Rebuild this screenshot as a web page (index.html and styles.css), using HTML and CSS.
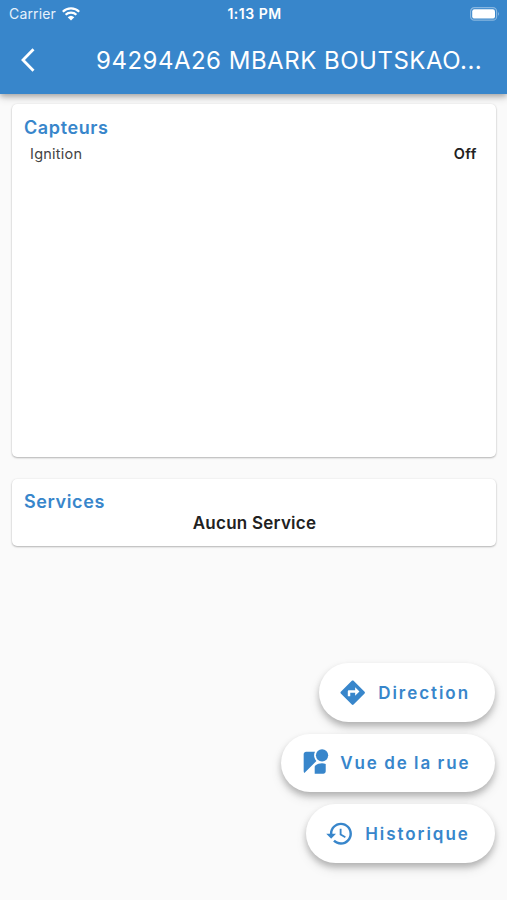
FILE: index.html
```
<!DOCTYPE html>
<html lang="fr">

<head>
    <meta charset="utf-8">
    <title>94294A26 MBARK BOUTSKAO</title>
    <link rel="stylesheet" href="styles.css">
</head>

<body>
    <header class="header">
        <div class="status">
            <div class="carrier">
                <span>Carrier</span>
                <svg class="wifi" viewBox="0 0 18 14">
                    <path d="M0.8 4.7a11.8 11.8 0 0 1 16.4 0M3.6 7.7a7.8 7.8 0 0 1 10.8 0" fill="none" stroke="#fff" stroke-width="2.2"/>
                    <path d="M5.7 10.2a4.8 4.8 0 0 1 6.6 0L9 13.6z" fill="#fff"/>
                </svg>
            </div>
            <div class="time">1:13 PM</div>
            <div class="battery">
                <svg width="30" height="14" viewBox="0 0 30 14">
                    <rect x="0.6" y="0.6" width="26" height="12.6" rx="3.8" fill="none" stroke="#fff" stroke-opacity=".4" stroke-width="1.2"/>
                    <rect x="2.2" y="2.2" width="22.8" height="9.4" rx="2.2" fill="#fff"/>
                    <path d="M28 4.8q1.6 2.1 0 4.2z" fill="#fff" opacity=".5"/>
                </svg>
            </div>
        </div>
        <div class="navbar">
            <svg class="back" viewBox="0 0 16 26">
                <path d="M13.5 2.3L3 13l10.5 10.7" fill="none" stroke="#fff" stroke-width="2.8"/>
            </svg>
            <div class="title">94294A26 MBARK BOUTSKAO...</div>
        </div>
    </header>

    <main class="content">
        <section class="card sensors">
            <h2>Capteurs</h2>
            <div class="row">
                <span>Ignition</span>
                <b>Off</b>
            </div>
        </section>
        <section class="card services">
            <h2>Services</h2>
            <p>Aucun Service</p>
        </section>
    </main>

    <!-- Floating buttons -->
    <div class="actions">
        <button class="fab direction">
            <svg class="icon" viewBox="0 0 24 24">
                <path d="M21.71 11.29l-9-9c-.39-.39-1.02-.39-1.41 0l-9 9c-.39.39-.39 1.02 0 1.41l9 9c.39.39 1.02.39 1.41 0l9-9c.39-.38.39-1.01 0-1.41zM14 14.5V12h-4v3H8v-4c0-.55.45-1 1-1h5V7.5l3.5 3.5-3.5 3.5z"/>
            </svg>
            <span>Direction</span>
        </button>
        <button class="fab street">
            <svg class="icon" viewBox="0 0 24 24">
                <path d="M12.56 14.33c-.34.27-.56.7-.56 1.17V21h7c1.1 0 2-.9 2-2v-5.98c-.94-.33-1.95-.52-3-.52-2.03 0-3.93.7-5.44 1.83z"/>
                <circle cx="18" cy="6" r="5"/>
                <path d="M11.5 6c0-1.08.27-2.1.74-3H5c-1.1 0-2 .9-2 2v14c0 .55.23 1.05.59 1.41l9.82-9.82C12.23 9.42 11.5 7.8 11.5 6z"/>
            </svg>
            <span>Vue de la rue</span>
        </button>
        <button class="fab history">
            <svg class="icon" viewBox="0 0 24 24">
                <path d="M13 3c-4.97 0-9 4.03-9 9H1l3.89 3.89.07.14L9 12H6c0-3.87 3.13-7 7-7s7 3.13 7 7-3.13 7-7 7c-1.93 0-3.68-.79-4.94-2.06l-1.42 1.42C8.27 19.99 10.51 21 13 21c4.97 0 9-4.03 9-9s-4.03-9-9-9zm-1 5v5l4.28 2.54.72-1.21-3.5-2.08V8H12z"/>
            </svg>
            <span>Historique</span>
        </button>
    </div>
</body>

</html>
```
FILE: styles.css
```
* {
    box-sizing: border-box;
}

body {
    margin: 0;
    height: 900px;
    display: flex;
    flex-direction: column;
    overflow: hidden;
    background: #fafafa;
    color: #212121;
    font-family: Inter, "Liberation Sans", sans-serif;
}

.header {
    height: 94px;
    flex: none;
    background: #3886cb;
    color: #fff;
    box-shadow: 0 2px 5px rgba(0, 0, 0, .22), 0 4px 8px rgba(0, 0, 0, .16);
}

.status {
    height: 27px;
    padding: 0 7px 0 9px;
    display: grid;
    grid-template-columns: 1fr auto 1fr;
    align-items: center;
    font-size: 14px;
}

.carrier {
    display: flex;
    align-items: center;
    gap: 6px;
    color: #e6f1fb;
    letter-spacing: .15px;
}

.wifi {
    width: 18px;
    height: 14px;
}

.time {
    font-size: 14px;
    font-weight: 600;
    letter-spacing: .5px;
}

.battery {
    display: flex;
    justify-content: flex-end;
}

.navbar {
    height: 66px;
    padding-left: 20px;
    display: flex;
    align-items: center;
}

.back {
    width: 16px;
    height: 26px;
}

.title {
    margin-left: 60px;
    font-size: 24px;
    letter-spacing: .5px;
    white-space: nowrap;
}

.content {
    padding: 10px 11px 0 12px;
    display: flex;
    flex-direction: column;
    gap: 22px;
}

.card {
    background: #fff;
    border-radius: 5px;
    padding: 12px;
    box-shadow: 0 1px 2px rgba(0, 0, 0, .27), 0 0 2px rgba(0, 0, 0, .08);
}

.card h2 {
    margin: 0;
    font-size: 18px;
    line-height: 24px;
    font-weight: 600;
    letter-spacing: .6px;
    color: #3886cb;
}

.sensors {
    height: 353px;
}

.row {
    display: flex;
    justify-content: space-between;
    padding: 4px 7px 0 6px;
    font-size: 14.5px;
    line-height: 20px;
    letter-spacing: .25px;
}

.row span {
    color: #444;
}

.row b {
    font-weight: 600;
    letter-spacing: .5px;
}

.services {
    height: 67px;
    padding-top: 11px;
}

.services p {
    margin: 0;
    padding-left: 1px;
    text-align: center;
    font-size: 17px;
    line-height: 19px;
    font-weight: 600;
    letter-spacing: .25px;
}

.actions {
    margin-top: auto;
    padding: 0 12px 37px 0;
    display: flex;
    flex-direction: column;
    align-items: flex-end;
    gap: 12px;
}

.fab {
    height: 58.6px;
    border: none;
    border-radius: 30px;
    padding: 0 0 0 19px;
    display: flex;
    align-items: center;
    gap: 10.8px;
    background: #fff;
    color: #3886cb;
    font: 600 17px Inter, "Liberation Sans", sans-serif;
    letter-spacing: 1.95px;
    word-spacing: -.9px;
    white-space: nowrap;
    box-shadow: 0 4px 6px rgba(0, 0, 0, .22), 0 6px 12px rgba(0, 0, 0, .1);
}

.direction {
    width: 176px;
}

.street {
    width: 214px;
}

.history {
    width: 189px;
}

.icon {
    width: 29.4px;
    height: 29.4px;
    flex: none;
    fill: #3886cb;
}
```
